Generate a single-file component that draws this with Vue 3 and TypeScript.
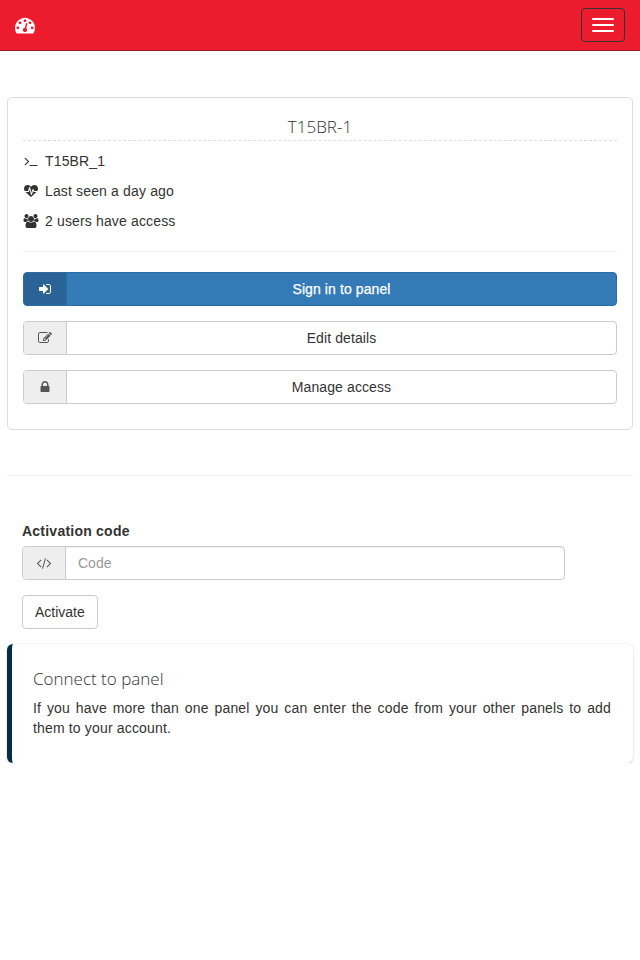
<script setup lang="ts">
const icons = {
  dashboard: 'M384 1152q0-53-37.5-90.5t-90.5-37.5-90.5 37.5-37.5 90.5 37.5 90.5 90.5 37.5 90.5-37.5 37.5-90.5zm192-448q0-53-37.5-90.5t-90.5-37.5-90.5 37.5-37.5 90.5 37.5 90.5 90.5 37.5 90.5-37.5 37.5-90.5zm428 481l101-382q6-26-7.5-48.5t-38.5-29.5-48 6.5-30 39.5l-101 382q-60 5-107 43.5t-63 98.5q-20 77 20 146t117 89 146-20 89-117q16-60-6-117t-72-91zm660-33q0-53-37.5-90.5t-90.5-37.5-90.5 37.5-37.5 90.5 37.5 90.5 90.5 37.5 90.5-37.5 37.5-90.5zm-640-640q0-53-37.5-90.5t-90.5-37.5-90.5 37.5-37.5 90.5 37.5 90.5 90.5 37.5 90.5-37.5 37.5-90.5zm448 192q0-53-37.5-90.5t-90.5-37.5-90.5 37.5-37.5 90.5 37.5 90.5 90.5 37.5 90.5-37.5 37.5-90.5zm320 448q0 261-141 483-19 29-54 29h-1402q-35 0-54-29-141-221-141-483 0-182 71-348t191-286 286-191 348-71 348 71 286 191 191 286 71 348z',
  terminal: 'M649 983l-466 466q-10 10-23 10t-23-10l-50-50q-10-10-10-23t10-23l393-393-393-393q-10-10-10-23t10-23l50-50q10-10 23-10t23 10l466 466q10 10 10 23t-10 23zm1079 457v64q0 14-9 23t-23 9h-960q-14 0-23-9t-9-23v-64q0-14 9-23t23-9h960q14 0 23 9t9 23z',
  heartbeat: 'M1280 1024h305q-5 6-10 10.5t-9 7.5l-3 4-623 600q-18 18-44 18t-44-18l-624-602q-5-2-21-20h369q22 0 39.5-13.5t22.5-34.5l70-281 190 667q6 20 23 33t39 13q21 0 38-13t23-33l146-485 56 112q18 35 57 35zm512-428q0 145-103 300h-369l-111-221q-8-17-25.5-27t-36.5-8q-45 5-56 46l-129 430-196-686q-6-20-23.5-33t-39.5-13-39 13.5-22 34.5l-116 464h-423q-103-155-103-300 0-220 127-344t351-124q62 0 126.5 21.5t120 58 95.5 68.5 76 68q36-36 76-68t95.5-68.5 120-58 126.5-21.5q224 0 351 124t127 344z',
  users: 'M593 896q-162 5-265 128h-134q-82 0-138-40.5t-56-118.5q0-353 124-353 6 0 43.5 21t97.5 42.5 119 21.5q67 0 133-23-5 37-5 66 0 139 81 256zm1071 637q0 120-73 189.5t-194 69.5h-874q-121 0-194-69.5t-73-189.5q0-53 3.5-103.5t14-109 26.5-108.5 43-97.5 62-81 85.5-53.5 111.5-20q10 0 43 21.5t73 48 107 48 135 21.5 135-21.5 107-48 73-48 43-21.5q61 0 111.5 20t85.5 53.5 62 81 43 97.5 26.5 108.5 14 109 3.5 103.5zm-1024-1277q0 106-75 181t-181 75-181-75-75-181 75-181 181-75 181 75 75 181zm704 384q0 159-112.5 271.5t-271.5 112.5-271.5-112.5-112.5-271.5 112.5-271.5 271.5-112.5 271.5 112.5 112.5 271.5zm576 225q0 78-56 118.5t-138 40.5h-134q-103-123-265-128 81-117 81-256 0-29-5-66 66 23 133 23 59 0 119-21.5t97.5-42.5 43.5-21q124 0 124 353zm-128-609q0 106-75 181t-181 75-181-75-75-181 75-181 181-75 181 75 75 181z',
  signIn: 'M1312 896q0 26-19 45l-544 544q-19 19-45 19t-45-19-19-45v-288h-448q-26 0-45-19t-19-45v-384q0-26 19-45t45-19h448v-288q0-26 19-45t45-19 45 19l544 544q19 19 19 45zm352-352v704q0 119-84.5 203.5t-203.5 84.5h-320q-13 0-22.5-9.5t-9.5-22.5q0-4-1-20t-.5-26.5 3-23.5 10-19.5 20.5-6.5h320q66 0 113-47t47-113v-704q0-66-47-113t-113-47h-288-11-13t-11.5-1-11.5-3-8-5.5-7-9-2-13.5q0-4-1-20t-.5-26.5 3-23.5 10-19.5 20.5-6.5h320q119 0 203.5 84.5t84.5 203.5z',
  edit: 'M888 1184l116-116-152-152-116 116v56h96v96h56zm440-720q-16-16-33 1l-350 350q-17 17-1 33t33-1l350-350q17-17 1-33zm80 594v190q0 119-84.5 203.5t-203.5 84.5h-832q-119 0-203.5-84.5t-84.5-203.5v-832q0-119 84.5-203.5t203.5-84.5h832q63 0 117 25 15 7 18 23 3 17-9 29l-49 49q-14 14-32 8-23-6-45-6h-832q-66 0-113 47t-47 113v832q0 66 47 113t113 47h832q66 0 113-47t47-113v-126q0-13 9-22l64-64q15-15 35-7t20 29zm-96-738l288 288-672 672h-288v-288zm444 132l-92 92-288-288 92-92q28-28 68-28t68 28l152 152q28 28 28 68t-28 68z',
  lock: 'M640 768h512v-192q0-106-75-181t-181-75-181 75-75 181v192zm832 96v576q0 40-28 68t-68 28h-960q-40 0-68-28t-28-68v-576q0-40 28-68t68-28h32v-192q0-184 132-316t316-132 316 132 132 316v192h32q40 0 68 28t28 68z',
  code: 'M553 1399l-50 50q-10 10-23 10t-23-10l-466-466q-10-10-10-23t10-23l466-466q10-10 23-10t23 10l50 50q10 10 10 23t-10 23l-393 393 393 393q10 10 10 23t-10 23zm591-1067l-373 1291q-4 13-15.5 19.5t-23.5 2.5l-62-17q-13-4-19.5-15.5t-2.5-24.5l373-1291q4-13 15.5-19.5t23.5-2.5l62 17q13 4 19.5 15.5t2.5 24.5zm657 651l-466 466q-10 10-23 10t-23-10l-50-50q-10-10-10-23t10-23l393-393-393-393q-10-10-10-23t10-23l50-50q10-10 23-10t23 10l466 466q10 10 10 23t-10 23z',
}

const details = [
  { icon: icons.terminal, box: '0 0 1792 1792', text: 'T15BR_1' },
  { icon: icons.heartbeat, box: '0 0 1792 1792', text: 'Last seen a day ago' },
  { icon: icons.users, box: '0 0 1920 1792', text: '2 users have access' },
]

const actions = [
  { icon: icons.signIn, label: 'Sign in to panel', primary: true },
  { icon: icons.edit, label: 'Edit details', primary: false },
  { icon: icons.lock, label: 'Manage access', primary: false },
]
</script>

<template>
  <div class="page">
    <nav class="navbar">
      <svg class="brand" viewBox="0 0 1792 1792" fill="currentColor"><path :d="icons.dashboard" /></svg>
      <button class="toggle" type="button" aria-label="Toggle navigation">
        <span></span>
        <span></span>
        <span></span>
      </button>
    </nav>

    <main class="content">
      <section class="panel">
        <h3 class="panel-title">T15BR-1</h3>
        <ul class="details">
          <li v-for="row in details" :key="row.text">
            <svg class="icon" :viewBox="row.box" fill="currentColor"><path :d="row.icon" /></svg>
            <span>{{ row.text }}</span>
          </li>
        </ul>
        <hr class="panel-rule" />
        <div class="actions">
          <a v-for="a in actions" :key="a.label" class="action" :class="{ primary: a.primary }" href="#">
            <span class="action-icon">
              <svg class="icon" viewBox="0 0 1792 1792" fill="currentColor"><path :d="a.icon" /></svg>
            </span>
            <span class="action-label">{{ a.label }}</span>
          </a>
        </div>
      </section>

      <hr class="rule" />

      <form class="activate" @submit.prevent>
        <label for="code">Activation code</label>
        <div class="input-group">
          <span class="addon">
            <svg class="icon" viewBox="0 0 1792 1792" fill="currentColor"><path :d="icons.code" /></svg>
          </span>
          <input id="code" type="text" placeholder="Code" />
        </div>
        <button class="btn" type="submit">Activate</button>
      </form>

      <section class="callout">
        <h4>Connect to panel</h4>
        <p>If you have more than one panel you can enter the code from your other panels to add them to your account.</p>
      </section>
    </main>
  </div>
</template>

<style>
body {
  margin: 0;
  background: #fff;
}
</style>

<style scoped>
.page {
  font-family: "Liberation Sans", Arial, sans-serif;
  font-size: 14px;
  line-height: 20px;
  color: #333;
}

.navbar {
  display: flex;
  align-items: center;
  justify-content: space-between;
  height: 50px;
  padding: 0 15px;
  background: #ed1b2e;
  border-bottom: 1px solid #8f1a2b;
}

.brand {
  width: 20px;
  height: 20px;
  color: #fff;
}

.toggle {
  display: flex;
  flex-direction: column;
  gap: 4px;
  width: 44px;
  height: 34px;
  padding: 9px 10px;
  background: transparent;
  border: 1px solid #333;
  border-radius: 4px;
}

.toggle span {
  display: block;
  width: 22px;
  height: 2px;
  background: #fff;
  border-radius: 1px;
}

.content {
  padding: 46px 7px 0;
}

.panel {
  padding: 15px;
  border: 1px solid #ddd;
  border-radius: 5px;
  height: 333px;
  box-sizing: border-box;
}

.panel-title {
  margin: 0;
  padding-top: 1px;
  font-family: "Open Sans", sans-serif;
  font-size: 17px;
  font-weight: 300;
  line-height: 26px;
  text-align: center;
  border-bottom: 1px dashed #ddd;
}

.details {
  margin: 5px 0 0;
  padding: 0;
  list-style: none;
  letter-spacing: 0.15px;
}

.details li {
  display: flex;
  align-items: center;
  gap: 6px;
  height: 30px;
}

.icon {
  flex: none;
  width: 14px;
  height: 14px;
}

.details .icon {
  width: 16px;
  height: 14px;
}

.panel-rule {
  margin: 15px 0 20px;
  border: 0;
  border-top: 1px solid #eee;
}

.actions {
  display: flex;
  flex-direction: column;
  gap: 15px;
}

.action {
  display: flex;
  height: 34px;
  box-sizing: border-box;
  color: #333;
  letter-spacing: 0.1px;
  text-decoration: none;
  background: #fff;
  border: 1px solid #ccc;
  border-radius: 4px;
  overflow: hidden;
}

.action-icon {
  display: flex;
  align-items: center;
  justify-content: center;
  width: 42px;
  color: #555;
  background: #eee;
  border-right: 1px solid #ccc;
}

.action-label {
  flex: 1;
  line-height: 32px;
  text-align: center;
}

.action.primary {
  color: #fff;
  background: #337ab7;
  border-color: #2e6da4;
  -webkit-text-stroke: 0.25px #fff;
}

.action.primary .action-icon {
  color: #fff;
  background: #2a6496;
  border-right-color: #2d6ea6;
}

.rule {
  margin: 45px 0 0;
  border: 0;
  border-top: 1px solid #eee;
}

.activate {
  padding: 45px 68px 0 15px;
}

.activate label {
  display: block;
  margin-bottom: 5px;
  font-weight: 700;
  letter-spacing: 0.23px;
}

.input-group {
  display: flex;
  height: 34px;
  box-sizing: border-box;
  border: 1px solid #ccc;
  border-radius: 4px;
  box-shadow: inset 0 1px 1px rgba(0, 0, 0, 0.075);
  overflow: hidden;
}

.addon {
  display: flex;
  align-items: center;
  justify-content: center;
  width: 42px;
  color: #555;
  background: #eee;
  border-right: 1px solid #ccc;
}

.input-group input {
  flex: 1;
  min-width: 0;
  padding: 0 12px;
  font: inherit;
  color: #555;
  background: transparent;
  border: 0;
  outline: 0;
}

.input-group input::placeholder {
  color: #999;
  opacity: 1;
}

.btn {
  display: block;
  height: 34px;
  margin-top: 15px;
  padding: 6px 12px;
  font: inherit;
  color: #333;
  background: #fff;
  border: 1px solid #ccc;
  border-radius: 4px;
}

.callout {
  margin-top: 15px;
  padding: 21px 22px 20px 21px;
  height: 119px;
  box-sizing: border-box;
  background: #fff;
  border-left: 5px solid #052e45;
  border-radius: 6px;
  box-shadow: 0 1px 2px rgba(0, 0, 0, 0.14), 0 0 2px rgba(0, 0, 0, 0.12);
}

.callout h4 {
  margin: 0 0 5px;
  font-family: "Open Sans", sans-serif;
  font-size: 17px;
  font-weight: 300;
  line-height: 28px;
}

.callout p {
  margin: 0;
  letter-spacing: 0.16px;
  text-align: justify;
}
</style>
